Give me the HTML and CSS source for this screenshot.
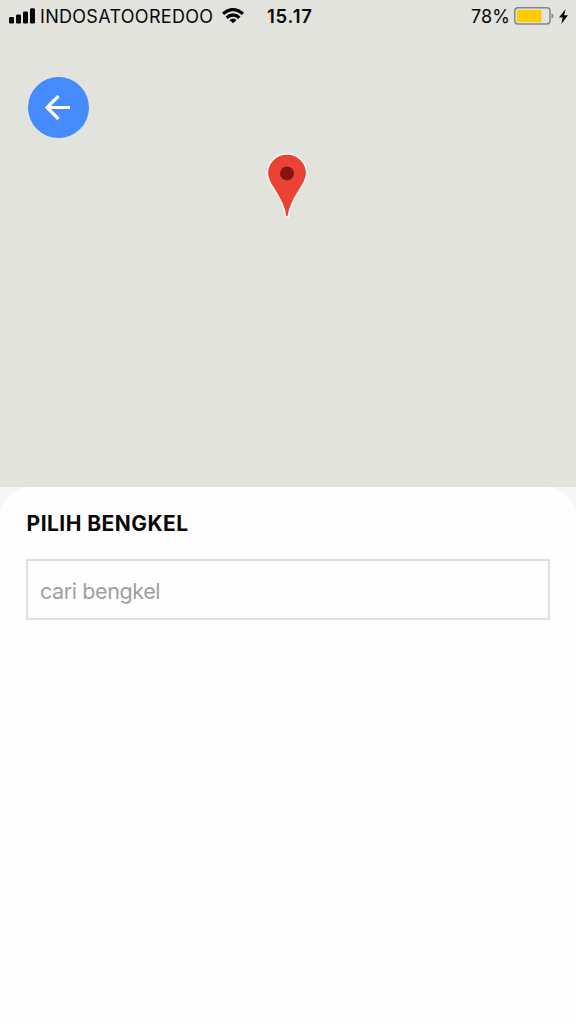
FILE: index.html
```html
<!DOCTYPE html>
<html lang="id">
<head>
<meta charset="utf-8">
<title>Pilih Bengkel</title>
<link rel="stylesheet" href="styles.css">
</head>
<body>
<main class="screen">
  <section class="map">
    <header class="status">
      <div class="status-left">
        <svg class="signal" width="26" height="16" viewBox="0 0 26 16"><rect x="0" y="9" width="5" height="6.5" rx="1.3"/><rect x="7" y="6.5" width="5" height="9" rx="1.3"/><rect x="14" y="3.5" width="5" height="12" rx="1.3"/><rect x="21" y="0.3" width="5" height="15.2" rx="1.3"/></svg>
        <span class="carrier">INDOSATOOREDOO</span>
        <svg class="wifi" width="22" height="16" viewBox="0 0 22 16"><g fill="none" stroke="#080808" stroke-width="3.3"><path d="M1 5.8Q11 -2.7 21 5.8"/><path d="M4.6 9.8Q11 4.2 17.4 9.8"/></g><path d="M7.4 12.1Q11 9.1 14.6 12.1L11 15.3Z"/></svg>
      </div>
      <time class="clock">15.17</time>
      <div class="status-right">
        <span class="percent">78%</span>
        <svg class="battery" width="40" height="18" viewBox="0 0 40 18"><rect x=".8" y=".8" width="35.2" height="16.2" rx="3.2" fill="none" stroke="#858583" stroke-width="1.5"/><rect x="3" y="3" width="24.5" height="12" rx=".8" fill="#ffcc00"/><path d="M37.5 6.2Q39.4 6.8 39.4 9T37.5 11.8Z" fill="#858583"/></svg>
        <svg class="bolt" width="9" height="15" viewBox="0 0 9 15"><path d="M6.5 0L0 8.6H3.7L2.3 15L9 6.2H5.2Z"/></svg>
      </div>
    </header>
    <button class="back" aria-label="Kembali">
      <svg width="27" height="26" viewBox="0 0 27 26" fill="none" stroke="#fff" stroke-width="3.2"><path d="M25 12.5H2.5M13.5 1L2 12.5L13.5 24"/></svg>
    </button>
    <svg class="pin" width="42" height="66" viewBox="0 0 42 66"><path d="M21 1C10 1 1.3 9.5 1.3 20.2C1.3 26.8 4.6 31 8.7 37.4C14.2 46 18.4 53.5 19.5 62.8Q19.7 64 21 64T22.5 62.8C23.6 53.5 27.8 46 33.3 37.4C37.4 31 40.7 26.8 40.7 20.2C40.7 9.5 32 1 21 1Z" fill="#ea4335" stroke="#fff8ef" stroke-width="1.6"/><circle cx="21" cy="20.4" r="7" fill="#851411"/></svg>
  </section>
  <section class="sheet-area">
    <div class="sheet">
      <h1 class="title">PILIH BENGKEL</h1>
      <input class="search" type="text" placeholder="cari bengkel">
    </div>
  </section>
</main>
</body>
</html>
```
FILE: styles.css
```css
* { box-sizing: border-box; }
body { margin: 0; font-family: Inter, "Liberation Sans", sans-serif; color: #080808; }
svg { display: block; flex: none; fill: #080808; }
.screen { width: 576px; height: 1024px; display: flex; flex-direction: column; overflow: hidden; }
.map { height: 487px; flex: none; background: #e3e3de; display: flex; flex-direction: column; }
.status { height: 32px; flex: none; display: flex; align-items: center; padding: 0 8px 0 9px; white-space: nowrap; font-size: 18px; line-height: 30px; }
.status-left { width: 258px; flex: none; display: flex; align-items: center; }
.carrier { width: 173px; margin: 0 9px 0 5px; padding-top: 2px; letter-spacing: .3px; }
.clock { font-size: 18.5px; font-weight: 600; letter-spacing: .8px; }
.status-right { display: flex; align-items: center; margin-left: auto; }
.percent { padding-top: 2px; letter-spacing: .1px; }
.battery { margin: 0 5px 0 4px; }
.back { width: 61px; height: 61px; flex: none; margin: 45px 0 0 28px; padding: 0; border: 0; border-radius: 50%; background: #468bfc; display: flex; align-items: center; justify-content: center; }
.back svg { fill: none; }
.pin { margin: 15px 0 0 266px; }
.sheet-area { flex: 1; background: #f5f6f6; }
.sheet { height: 100%; padding: 23px 26px; background: #fefefe; border-radius: 30px 30px 0 0; }
.title { margin: 0; padding-left: .6px; font-size: 21px; line-height: 28px; font-weight: 700; letter-spacing: .45px; }
.search { display: block; width: 524px; height: 61px; margin: 21px 0 0; padding: 3px 12px 0; border: 2px solid #dfdfdf; border-radius: 0; background: #fefefe; font: 400 21.5px/28px Inter, "Liberation Sans", sans-serif; letter-spacing: -.4px; outline: 0; }
.search::placeholder { color: #a0a0a0; opacity: 1; }
```
